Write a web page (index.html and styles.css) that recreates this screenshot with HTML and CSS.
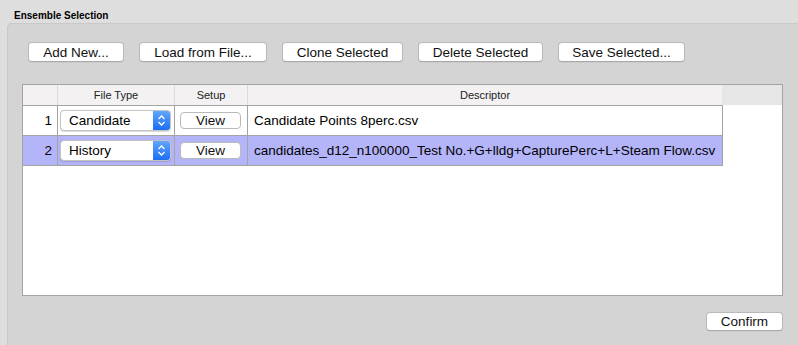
FILE: index.html
```html
<!DOCTYPE html>
<html>
<head>
    <title>Ensemble Selection</title>
    <link rel="stylesheet" href="styles.css">
</head>
<body>
    <div class="group-title">Ensemble Selection</div>
    <div class="group-box">
        <div class="toolbar">
            <button class="mac-button w-add">Add New...</button>
            <button class="mac-button w-load">Load from File...</button>
            <button class="mac-button w-clone">Clone Selected</button>
            <button class="mac-button w-delete">Delete Selected</button>
            <button class="mac-button w-save">Save Selected...</button>
        </div>

        <div class="ensemble-table">
            <div class="table-head">
                <div class="head-cell col-num"></div>
                <div class="head-cell col-type">File Type</div>
                <div class="head-cell col-setup">Setup</div>
                <div class="head-cell col-desc">Descriptor</div>
            </div>
            <div class="table-rows">
                <div class="table-row">
                    <div class="cell col-num num">1</div>
                    <div class="cell col-type">
                        <div class="combo">
                            <span class="combo-text">Candidate</span>
                            <span class="combo-arrows">
                                <svg width="9" height="13" viewBox="0 0 9 13"><path d="M1.5 5 L4.5 2 L7.5 5 M1.5 8 L4.5 11 L7.5 8" fill="none" stroke="#fff" stroke-width="1.3"/></svg>
                            </span>
                        </div>
                    </div>
                    <div class="cell col-setup"><button class="view-button">View</button></div>
                    <div class="cell col-desc desc">Candidate Points 8perc.csv</div>
                </div>
                <div class="table-row selected">
                    <div class="cell col-num num">2</div>
                    <div class="cell col-type">
                        <div class="combo">
                            <span class="combo-text">History</span>
                            <span class="combo-arrows">
                                <svg width="9" height="13" viewBox="0 0 9 13"><path d="M1.5 5 L4.5 2 L7.5 5 M1.5 8 L4.5 11 L7.5 8" fill="none" stroke="#fff" stroke-width="1.3"/></svg>
                            </span>
                        </div>
                    </div>
                    <div class="cell col-setup"><button class="view-button">View</button></div>
                    <div class="cell col-desc desc">candidates_d12_n100000_Test No.+G+lldg+CapturePerc+L+Steam Flow.csv</div>
                </div>
            </div>
        </div>

        <div class="footer">
            <button class="mac-button confirm-button">Confirm</button>
        </div>
    </div>
</body>
</html>
```

FILE: styles.css
```css
body {
    margin: 0;
    background-color: #dedede;
    font-family: "Liberation Sans", Arial, sans-serif;
    font-size: 13.5px;
    color: #000;
    overflow: hidden;
}

/* group box title */
.group-title {
    height: 23px;
    box-sizing: border-box;
    padding: 10px 0 0 14px;
    font-size: 10px;
    line-height: 12px;
    font-weight: bold;
}

.group-box {
    margin-left: 7px;
    width: 800px;
    height: 330px;
    box-sizing: border-box;
    background-color: #d4d4d4;
    border: 1px solid #c9c9c9;
    border-radius: 4px;
    padding: 18px 0 0 14px;
}

.toolbar {
    display: flex;
    gap: 15px;
    margin-left: 6px;
}

.mac-button {
    height: 20px;
    padding: 0;
    background-color: #fff;
    border: 1px solid #b9b9b9;
    border-bottom-color: #a9a9a9;
    border-radius: 4px;
    font-family: "Liberation Sans", Arial, sans-serif;
    font-size: 13.5px;
    color: #111;
    box-shadow: 0 0.5px 0.5px rgba(0, 0, 0, 0.08);
}

.w-add { width: 96px; }
.w-load { width: 128px; }
.w-clone { width: 121px; }
.w-delete { width: 125px; }
.w-save { width: 127px; }

/* table */
.ensemble-table {
    margin-top: 22px;
    width: 761px;
    height: 212px;
    box-sizing: border-box;
    border: 1px solid #a4a4a4;
    background-color: #fff;
}

.table-head {
    display: flex;
    height: 20px;
    background-color: #e6e6e6;
}

.head-cell {
    box-sizing: border-box;
    background-color: #f3f1f1;
    border-right: 1px solid #dcdcdc;
    font-size: 11px;
    line-height: 20px;
    text-align: center;
    color: #222;
}

.head-cell.col-desc {
    border-right: none;
    width: 474px;
}

.col-num { width: 35px; }
.col-type { width: 117px; }
.col-setup { width: 73px; }
.col-desc { width: 475px; }

.table-rows {
    width: 700px;
    border-top: 1px solid #a4a4a4;
}

.table-row {
    display: flex;
    height: 30px;
}

.table-row.selected {
    background-color: #b4b4f9;
}

.cell {
    box-sizing: border-box;
    border-right: 1px solid #a4a4a4;
    border-bottom: 1px solid #a4a4a4;
    display: flex;
    align-items: center;
}

.num {
    justify-content: flex-end;
    padding-right: 5px;
}

.desc {
    padding-left: 6px;
    white-space: nowrap;
}

.combo {
    margin-left: 2px;
    width: 111px;
    height: 21px;
    box-sizing: border-box;
    display: flex;
    background-color: #fff;
    border: 1px solid #c4c4c4;
    border-radius: 4px;
    box-shadow: 0 0.5px 1px rgba(0, 0, 0, 0.15);
    overflow: hidden;
}

.combo-text {
    flex: 1;
    padding-left: 8px;
    line-height: 19px;
}

.combo-arrows {
    width: 17px;
    display: flex;
    align-items: center;
    justify-content: center;
    background: linear-gradient(#62a6fc, #1c6ef4);
}

.view-button {
    margin-left: 5px;
    width: 61px;
    height: 17px;
    padding: 0;
    background-color: #fff;
    border: 1px solid #b9b9b9;
    border-radius: 4px;
    font-family: "Liberation Sans", Arial, sans-serif;
    font-size: 13.5px;
    line-height: 14px;
    color: #111;
}

.footer {
    display: flex;
    width: 761px;
    justify-content: flex-end;
    margin-top: 16px;
}

.confirm-button {
    width: 77px;
    height: 19px;
}
```
